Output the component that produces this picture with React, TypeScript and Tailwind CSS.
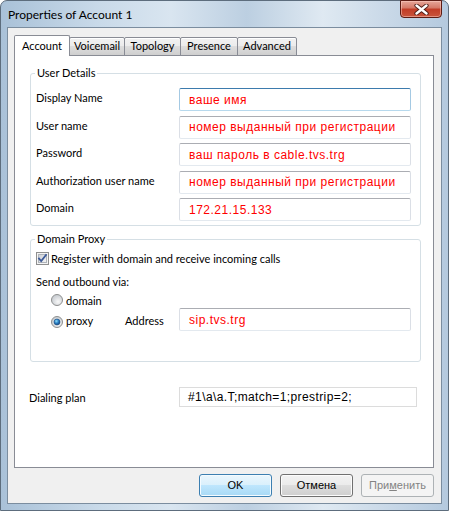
import { ReactNode } from 'react'

const fields = [
  { label: 'Display Name', value: 'ваше имя', focused: true },
  { label: 'User name', value: 'номер выданный при регистрации' },
  { label: 'Password', value: 'ваш пароль в cable.tvs.trg' },
  { label: 'Authorization user name', value: 'номер выданный при регистрации' },
  { label: 'Domain', value: '172.21.15.133' },
]

const tabs = [
  { name: 'Voicemail', w: 'w-[56px]' },
  { name: 'Topology', w: 'w-[57px]' },
  { name: 'Presence', w: 'w-[58px]' },
  { name: 'Advanced', w: 'w-[60px]' },
]

const TextBox = ({ value, focused }: { value: string; focused?: boolean }) => (
  <div
    className={
      'h-[23px] w-[232px] shrink-0 border bg-white flex items-center pl-[9px] rounded-[2px] ' +
      "font-['Liberation_Sans',Arial,sans-serif] text-[12px] tracking-[0.5px] text-[#ff0000] whitespace-nowrap " +
      (focused
        ? 'border-t-[#3d7bad] border-x-[#a4c9e3] border-b-[#b7d9ed]'
        : 'border-t-[#abadb3] border-x-[#dbdfe6] border-b-[#e3e9ef]')
    }
  >
    {value}
  </div>
)

const GroupBox = ({ title, children, className }: { title: string; children: ReactNode; className?: string }) => (
  <fieldset className={'ml-[15px] w-[391px] border border-[#d5dfe5] rounded-[3px] ' + (className ?? '')}>
    <legend className="ml-[4px] px-[2px] leading-[14px]">{title}</legend>
    {children}
  </fieldset>
)

const CheckBox = () => (
  <svg width="13" height="13" viewBox="0 0 13 13" className="shrink-0">
    <defs>
      <linearGradient id="cbg" x1="0" y1="0" x2="1" y2="1">
        <stop offset="0" stopColor="#cbcfd5" />
        <stop offset="1" stopColor="#f6f6f6" />
      </linearGradient>
    </defs>
    <rect x="0.5" y="0.5" width="12" height="12" fill="#f4f4f4" stroke="#8e8f8f" />
    <rect x="2.5" y="2.5" width="8" height="8" fill="url(#cbg)" stroke="#aeb3b9" strokeWidth="1" />
    <path d="M3 6.5 L5.2 9 L10 3" fill="none" stroke="#3c5a98" strokeWidth="1.8" strokeLinecap="square" />
  </svg>
)

const Radio = ({ checked }: { checked?: boolean }) => (
  <svg width="12" height="12" viewBox="0 0 12 12" className="shrink-0">
    <defs>
      <radialGradient id="rbg" cx="0.6" cy="0.65" r="0.6">
        <stop offset="0" stopColor="#f8f8f8" />
        <stop offset="1" stopColor="#c9cdd2" />
      </radialGradient>
      <radialGradient id="rdot" cx="0.4" cy="0.35" r="0.7">
        <stop offset="0" stopColor="#8fe0fb" />
        <stop offset="0.5" stopColor="#2a7fc4" />
        <stop offset="1" stopColor="#0d3d75" />
      </radialGradient>
    </defs>
    <circle cx="6" cy="6" r="5.5" fill="url(#rbg)" stroke="#8e8f8f" />
    {checked && <circle cx="6" cy="6" r="3" fill="url(#rdot)" stroke="#1c4f85" strokeWidth="0.6" />}
  </svg>
)

const CloseButton = () => (
  <div className="-mt-px w-[42px] h-[18px] rounded-b-[4px] border border-[#5c1c14] bg-[linear-gradient(180deg,#e6a699_0%,#d57a69_42%,#c23d27_52%,#c9553c_100%)] shadow-[inset_0_0_0_1px_rgba(255,210,200,0.5)] flex items-center justify-center">
    <svg width="15" height="11" viewBox="0 0 15 11">
      <path d="M2.5 1.5 L12.5 9.5 M12.5 1.5 L2.5 9.5" stroke="#4a1a14" strokeWidth="4.2" strokeLinecap="round" />
      <path d="M2.5 1.5 L12.5 9.5 M12.5 1.5 L2.5 9.5" stroke="#ffffff" strokeWidth="2.4" strokeLinecap="round" />
    </svg>
  </div>
)

const Button = ({ kind, children }: { kind: 'default' | 'normal' | 'disabled'; children: ReactNode }) => {
  const look =
    kind === 'default'
      ? 'border-[#3c7fb1] bg-[linear-gradient(180deg,#eaf6fd_0%,#d9f0fc_50%,#bee6fd_50%,#a7d9f5_100%)] shadow-[inset_0_0_0_1px_#f4fbff]'
      : kind === 'normal'
        ? 'border-[#707070] bg-[linear-gradient(180deg,#f2f2f2_0%,#ebebeb_50%,#dddddd_50%,#cfcfcf_100%)] shadow-[inset_0_0_0_1px_#fcfcfc]'
        : 'border-[#adb2b5] bg-[#f4f4f4] text-[#838383]'
  return (
    <div
      className={
        "w-[73px] h-[23px] rounded-[3px] border flex items-center justify-center font-['Liberation_Sans',Arial,sans-serif] text-[11px] " +
        look
      }
    >
      {children}
    </div>
  )
}

export default function App() {
  return (
    <div className="w-[449px] h-[511px] bg-white">
      <div className="w-full h-full flex flex-col rounded-t-[7px] border border-[#5d6d7d] bg-[linear-gradient(90deg,#a9c1d8_0%,#c9dae9_22%,#d9e5f0_38%,#bccfe1_55%,#dfe9f2_72%,#b4c9de_100%)] font-['Lato',sans-serif] text-[11px] text-black">
        {/* title bar */}
        <div className="h-[26px] shrink-0 flex items-start justify-between pl-[7px] pr-[6px]">
          <span className="mt-[6px] leading-[16px] text-[12px]">Properties of Account 1</span>
          <CloseButton />
        </div>

        {/* client area */}
        <div className="mx-[6px] mb-[6px] flex-1 border border-[#7b8d9f] bg-[#f0f0f0] flex flex-col">
          {/* tabs */}
          <div className="pl-[6px] pt-[7px] flex items-end">
            <div className="relative z-10 w-[56px] h-[21px] border border-b-0 border-[#898c95] rounded-t-[2px] bg-white flex items-center justify-center">
              Account
            </div>
            {tabs.map((t) => (
              <div
                key={t.name}
                className={
                  '-ml-px h-[19px] border border-[#898c95] rounded-t-[2px] bg-[linear-gradient(180deg,#f2f2f2_0%,#ebebeb_50%,#dddddd_50%,#cfcfcf_100%)] shadow-[inset_0_1px_0_#fff] flex items-center justify-center pb-[1px] ' +
                  t.w
                }
              >
                {t.name}
              </div>
            ))}
          </div>

          {/* tab panel */}
          <div className="ml-[6px] -mt-px w-[420px] h-[413px] border border-[#898c95] bg-white flex flex-col">
            <GroupBox title="User Details" className="mt-[10px]">
              <div className="pl-[5px] pr-[8px] pt-[8px] pb-[4px] flex flex-col gap-[4.5px]">
                {fields.map((f) => (
                  <div key={f.label} className="flex items-start">
                    <span className="w-[143px] shrink-0 pt-[2px] leading-[15px]">{f.label}</span>
                    <TextBox value={f.value} focused={f.focused} />
                  </div>
                ))}
              </div>
            </GroupBox>

            <GroupBox title="Domain Proxy" className="mt-[6px]">
              <div className="pl-[5px] pr-[8px] pt-[6px] pb-[30px] flex flex-col">
                <div className="h-[13px] flex items-center gap-[2px]">
                  <CheckBox />
                  <span className="leading-[15px]">Register with domain and receive incoming calls</span>
                </div>
                <div className="mt-[9px] leading-[16px]">Send outbound via:</div>
                <div className="mt-[4px] h-[12px] pl-[15px] flex items-center gap-[3px]">
                  <Radio />
                  <span className="leading-[15px]">domain</span>
                </div>
                <div className="mt-[2px] pl-[15px] flex items-start">
                  <div className="mt-[8px]">
                    <Radio checked />
                  </div>
                  <span className="ml-[3px] w-[59px] mt-[5px] leading-[15px]">proxy</span>
                  <span className="w-[54px] mt-[5px] leading-[15px]">Address</span>
                  <TextBox value="sip.tvs.trg" />
                </div>
              </div>
            </GroupBox>

            <div className="mt-[25px] pl-[14px] flex items-center">
              <span className="w-[150px] shrink-0 leading-[15px]">Dialing plan</span>
              <div className="w-[238px] h-[20px] border border-[#dcdcdc] bg-white flex items-center pl-[8px] font-['Liberation_Sans',Arial,sans-serif] text-[12px] tracking-[0.4px] whitespace-nowrap">
                {'#1\\a\\a.T;match=1;prestrip=2;'}
              </div>
            </div>
          </div>

          {/* buttons */}
          <div className="mt-[6px] pr-[7px] flex justify-end gap-[8px]">
            <Button kind="default">OK</Button>
            <Button kind="normal">Отмена</Button>
            <Button kind="disabled">
              <span>
                При<span className="underline">м</span>енить
              </span>
            </Button>
          </div>
        </div>
      </div>
    </div>
  )
}
